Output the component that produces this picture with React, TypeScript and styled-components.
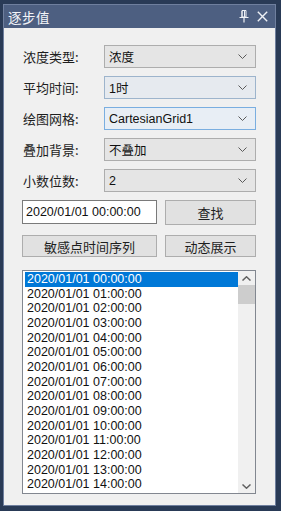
import { Fragment } from 'react';
import styled, { createGlobalStyle } from 'styled-components';

const GlobalStyle = createGlobalStyle`
  html, body {
    margin: 0;
    padding: 0;
    background: #293a56;
  }
  body {
    font-family: "Liberation Sans", "Noto Sans CJK SC", sans-serif;
  }
`;

const Shell = styled.div`
  padding: 4px 5px 3px 3px;
  width: 273px;
`;

const Panel = styled.div`
  border: 1px solid #6f7f9e;
  background: #f0f0f0;
  display: flex;
  flex-direction: column;
  height: 502px;
  box-sizing: border-box;
`;

const TitleBar = styled.div`
  height: 24px;
  background: #4d5f81;
  display: flex;
  align-items: center;
  padding: 0 7px 0 4px;
  color: #f2f4f8;
`;

const Title = styled.div`
  flex: 1;
  font-size: 13.5px;
  font-family: "Noto Sans CJK SC", sans-serif;
  letter-spacing: 0.5px;
`;

const TitleButton = styled.svg`
  display: block;
  margin-left: 8px;
`;

const Body = styled.div`
  flex: 1;
  display: flex;
  flex-direction: column;
  padding: 17px 19px 11px 18px;
`;

const Form = styled.div`
  display: grid;
  grid-template-columns: 82px 152px;
  row-gap: 8px;
`;

const Label = styled.div`
  font-family: "Noto Sans CJK SC", sans-serif;
  font-size: 13px;
  color: #1e1e1e;
  display: flex;
  align-items: center;
  padding-left: 1px;
`;

const Combo = styled.div<{ $state?: 'normal' | 'hover' | 'focus' }>`
  height: 23px;
  box-sizing: border-box;
  border: 1px solid
    ${p => (p.$state === 'focus' ? '#7aaee0' : p.$state === 'hover' ? '#9db4cc' : '#adadad')};
  background: ${p => (p.$state === 'focus' ? '#e8eef5' : p.$state === 'hover' ? '#e6eaef' : '#e5e5e5')};
  display: flex;
  align-items: center;
  padding: 0 8px 0 4px;
  font-size: 12.5px;
  color: #111;
`;

const ComboText = styled.span`
  flex: 1;
`;

const Row = styled.div<{ $top: number }>`
  display: grid;
  grid-template-columns: 135px 91px;
  column-gap: 8px;
  margin-top: ${p => p.$top}px;
`;

const TextInput = styled.div`
  height: 24px;
  box-sizing: border-box;
  border: 1px solid #7a7a7a;
  background: #fff;
  display: flex;
  align-items: center;
  padding-left: 3px;
  font-size: 12.5px;
  color: #111;
`;

const Button = styled.div<{ $h: number }>`
  height: ${p => p.$h}px;
  box-sizing: border-box;
  border: 1px solid #adadad;
  background: #e1e1e1;
  display: flex;
  align-items: center;
  justify-content: center;
  font-family: "Noto Sans CJK SC", sans-serif;
  font-size: 13px;
  color: #1e1e1e;
`;

const ListBox = styled.div`
  margin-top: 13px;
  height: 224px;
  box-sizing: border-box;
  border: 1px solid #828790;
  background: #fff;
  display: flex;
  overflow: hidden;
`;

const Items = styled.div`
  flex: 1;
  padding: 1px 0 0 2px;
`;

const Item = styled.div<{ $selected?: boolean }>`
  height: 14.67px;
  line-height: 14.67px;
  font-size: 12.5px;
  padding-left: 2px;
  color: ${p => (p.$selected ? '#fff' : '#111')};
  background: ${p => (p.$selected ? '#0078d7' : 'transparent')};
  white-space: nowrap;
`;

const ScrollBar = styled.div`
  width: 17px;
  background: #f0f0f0;
  display: flex;
  flex-direction: column;
  align-items: center;
`;

const ScrollArrow = styled.svg`
  display: block;
  margin: 5px 0 4px;
`;

const Thumb = styled.div`
  width: 17px;
  height: 19px;
  background: #cdcdcd;
`;

const ScrollTrack = styled.div`
  flex: 1;
`;

const Chevron = () => (
  <svg width="9" height="5" viewBox="0 0 9 5">
    <path d="M0.5 0.5 L4.5 4.5 L8.5 0.5" fill="none" stroke="#5a5a5a" strokeWidth="1" />
  </svg>
);

const fields: { label: string; value: string; state?: 'normal' | 'hover' | 'focus' }[] = [
  { label: '浓度类型:', value: '浓度' },
  { label: '平均时间:', value: '1时', state: 'hover' },
  { label: '绘图网格:', value: 'CartesianGrid1', state: 'focus' },
  { label: '叠加背景:', value: '不叠加' },
  { label: '小数位数:', value: '2' },
];

const times = Array.from({ length: 15 }, (_, i) => `2020/01/01 ${String(i).padStart(2, '0')}:00:00`);

export default function App() {
  return (
    <>
      <GlobalStyle />
      <Shell>
        <Panel>
          <TitleBar>
            <Title>逐步值</Title>
            <TitleButton width="10" height="13" viewBox="0 0 10 13">
              <path d="M3 0.5 H7 V7 H3 Z M3 1 V7 M5.5 1 V7" fill="none" stroke="#eef1f6" strokeWidth="1" />
              <path d="M0.5 7.5 H9.5 M5 7.5 V12.5" fill="none" stroke="#eef1f6" strokeWidth="1.2" />
            </TitleButton>
            <TitleButton width="11" height="11" viewBox="0 0 11 11">
              <path d="M0.8 0.8 L10.2 10.2 M10.2 0.8 L0.8 10.2" stroke="#eef1f6" strokeWidth="1.4" />
            </TitleButton>
          </TitleBar>
          <Body>
            <Form>
              {fields.map(f => (
                <Fragment key={f.label}>
                  <Label>{f.label}</Label>
                  <Combo $state={f.state}>
                    <ComboText>{f.value}</ComboText>
                    <Chevron />
                  </Combo>
                </Fragment>
              ))}
            </Form>
            <Row $top={8}>
              <TextInput>2020/01/01 00:00:00</TextInput>
              <Button $h={25}>查找</Button>
            </Row>
            <Row $top={10}>
              <Button $h={22}>敏感点时间序列</Button>
              <Button $h={22}>动态展示</Button>
            </Row>
            <ListBox>
              <Items>
                {times.map((t, i) => (
                  <Item key={t} $selected={i === 0}>{t}</Item>
                ))}
              </Items>
              <ScrollBar>
                <ScrollArrow width="9" height="5" viewBox="0 0 9 5">
                  <path d="M0.5 4.5 L4.5 0.8 L8.5 4.5" fill="none" stroke="#606060" strokeWidth="1.5" />
                </ScrollArrow>
                <Thumb />
                <ScrollTrack />
                <ScrollArrow width="9" height="5" viewBox="0 0 9 5">
                  <path d="M0.5 0.5 L4.5 4.2 L8.5 0.5" fill="none" stroke="#606060" strokeWidth="1.5" />
                </ScrollArrow>
              </ScrollBar>
            </ListBox>
          </Body>
        </Panel>
      </Shell>
    </>
  );
}
